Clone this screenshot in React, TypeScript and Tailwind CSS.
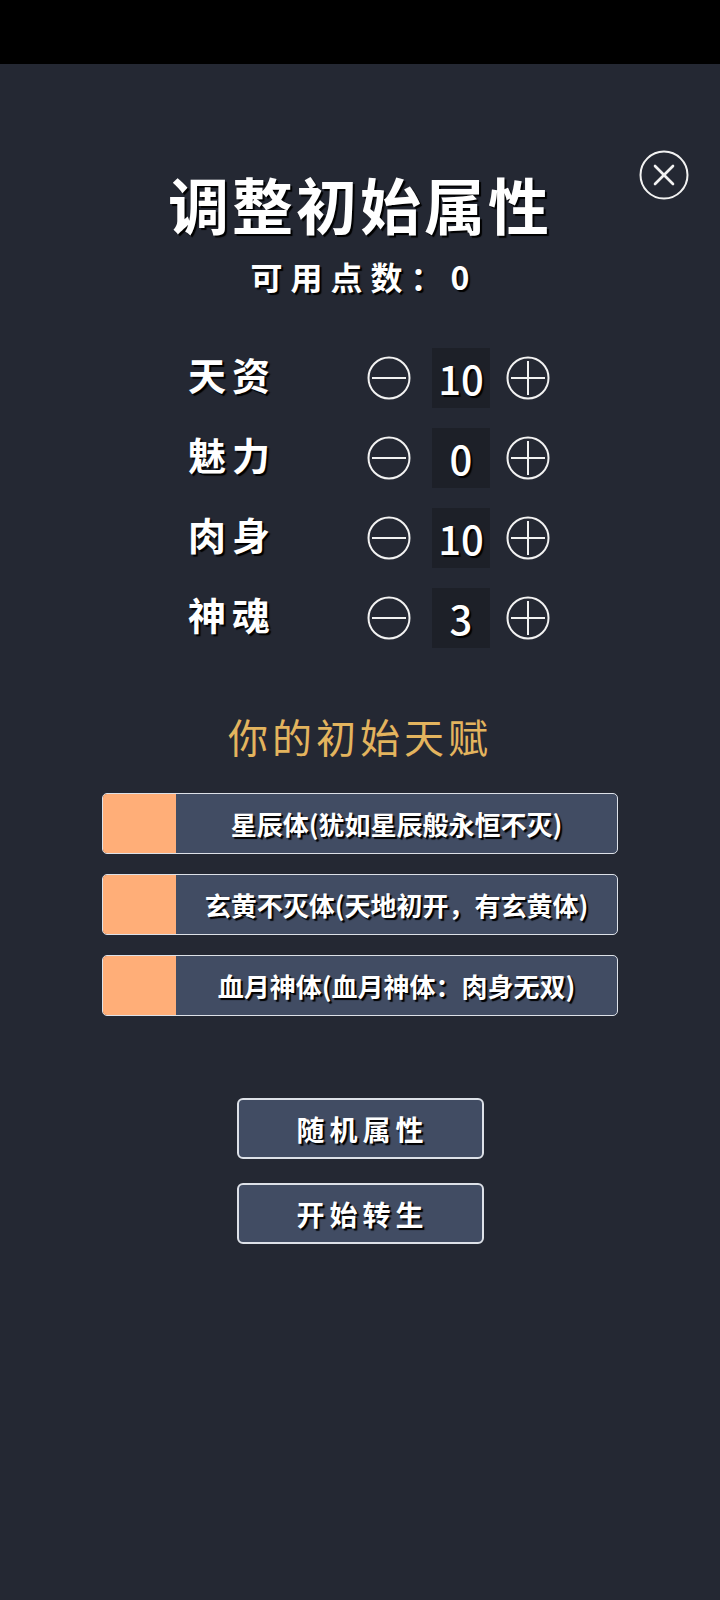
import React from "react";

const font = { fontFamily: '"Noto Sans CJK SC", "Noto Sans", sans-serif' };

function CircleBtn({ plus }: { plus?: boolean }) {
  return (
    <svg width="44" height="44" viewBox="0 0 44 44" className="shrink-0">
      <circle cx="22" cy="22" r="20.5" fill="none" stroke="#f2f2f2" strokeWidth="2" />
      <line x1="5" y1="22" x2="39" y2="22" stroke="#f2f2f2" strokeWidth="2" />
      {plus && <line x1="22" y1="5" x2="22" y2="39" stroke="#f2f2f2" strokeWidth="2" />}
    </svg>
  );
}

const attrs = [
  { name: "天资", v: 10 },
  { name: "魅力", v: 0 },
  { name: "肉身", v: 10 },
  { name: "神魂", v: 3 },
];

const talents = [
  "星辰体(犹如星辰般永恒不灭)",
  "玄黄不灭体(天地初开，有玄黄体)",
  "血月神体(血月神体：肉身无双)",
];

export default function App() {
  return (
    <div className="w-[720px] min-h-[1600px] bg-[#242833] relative" style={font}>
      <div className="h-16 bg-black" />
      <button className="absolute left-[639px] top-[150px] w-[50px] h-[50px]">
        <svg width="50" height="50" viewBox="0 0 50 50">
          <circle cx="25" cy="25" r="23.5" fill="none" stroke="#f2f2f2" strokeWidth="2" />
          <line x1="16" y1="16" x2="34" y2="34" stroke="#f2f2f2" strokeWidth="2.6" strokeLinecap="round" />
          <line x1="34" y1="16" x2="16" y2="34" stroke="#f2f2f2" strokeWidth="2.6" strokeLinecap="round" />
        </svg>
      </button>

      <div className="flex flex-col items-center">
        <h1 className="mt-[109px] text-[61px] leading-none font-bold text-white tracking-[3px] [text-shadow:2px_2px_1px_#000]">
          调整初始属性
        </h1>
        <div className="mt-[26px] text-[32px] leading-none font-bold text-white tracking-[8px] pl-[8px] [text-shadow:2px_2px_1px_#000]">
          可用点数：0
        </div>
      </div>

      <div className="mt-[56px] flex flex-col gap-5 pl-[188px]">
        {attrs.map((a) => (
          <div key={a.name} className="flex items-center h-[60px]">
            <div className="w-[179px] text-[38px] leading-none font-bold text-white tracking-[6px] -mt-2 [text-shadow:2px_2px_1px_#000]">
              {a.name}
            </div>
            <CircleBtn />
            <div className="ml-[21px] w-[58px] h-[60px] bg-[#1d2028] flex items-center justify-center text-[40px] font-medium text-white leading-none [text-shadow:2px_2px_1px_#000]">
              {a.v}
            </div>
            <div className="ml-4">
              <CircleBtn plus />
            </div>
          </div>
        ))}
      </div>

      <div className="mt-[68px] flex justify-center">
        <div className="text-[40px] leading-none text-[#e3b45e] tracking-[4px]">你的初始天赋</div>
      </div>

      <div className="mt-[37px] flex flex-col gap-5 px-[102px]">
        {talents.map((t) => (
          <div key={t} className="h-[61px] flex rounded-[5px] border-[1.5px] border-[#dde1e8] bg-[#414c63] overflow-hidden">
            <div className="w-[73px] bg-[#ffae78]" />
            <div className="flex-1 flex items-center justify-center text-[26px] font-bold text-white [text-shadow:2px_2px_1px_#000]">
              {t}
            </div>
          </div>
        ))}
      </div>

      <div className="mt-[82px] flex flex-col items-center gap-6">
        {["随机属性", "开始转生"].map((b) => (
          <button
            key={b}
            className="w-[247px] h-[61px] rounded-[6px] border-2 border-[#dde1e8] bg-[#414c63] text-white text-[28px] font-bold tracking-[5px] pl-[5px] [text-shadow:2px_2px_1px_#000]"
          >
            {b}
          </button>
        ))}
      </div>
    </div>
  );
}
